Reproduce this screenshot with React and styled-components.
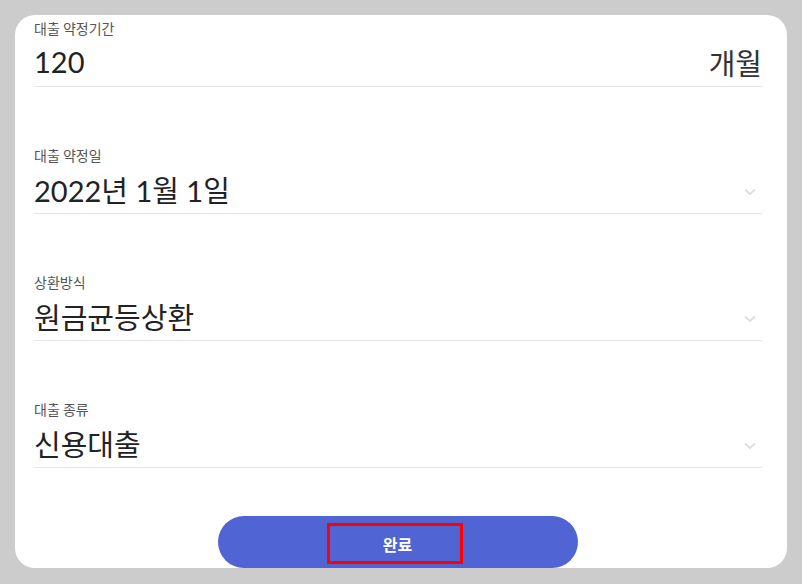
import React from 'react';
import styled, { createGlobalStyle } from 'styled-components';

const GlobalStyle = createGlobalStyle`
  html, body {
    margin: 0;
    padding: 0;
    background: #cccccc;
  }
  body {
    font-family: Lato, "Noto Sans CJK KR", sans-serif;
  }
`;

const Page = styled.div`
  width: 802px;
  height: 584px;
  padding: 15px 15px 16px 15px;
  box-sizing: border-box;
`;

const Card = styled.div`
  height: 553px;
  background: #ffffff;
  border-radius: 20px;
  overflow: hidden;
  padding: 4px 25px 0 19px;
  box-sizing: border-box;
  display: flex;
  flex-direction: column;
`;

const Field = styled.div`
  display: flex;
  flex-direction: column;
  border-bottom: 1px solid #e6e6e6;
  & + & {
    margin-top: 59px;
  }
`;

const Label = styled.div`
  font-family: "Noto Sans CJK KR", sans-serif;
  font-size: 14px;
  line-height: 18px;
  color: #555555;
`;

const ValueRow = styled.div`
  height: 49px;
  display: flex;
  align-items: center;
  justify-content: space-between;
`;

const Value = styled.div`
  font-family: Lato, "Noto Sans CJK KR", sans-serif;
  font-size: 29px;
  color: #222222;
`;

const Unit = styled(Value)`
  color: #333333;
`;

const Chevron = styled.svg`
  width: 12px;
  height: 8px;
  margin-right: 6px;
  margin-top: 6px;
`;

const Footer = styled.div`
  margin-top: 48px;
  display: flex;
  justify-content: center;
`;

const Button = styled.button`
  width: 360px;
  height: 52px;
  border: none;
  border-radius: 26px;
  background: #5064d4;
  display: flex;
  align-items: center;
  justify-content: center;
  padding: 0;
  cursor: pointer;
`;

const Focus = styled.span`
  width: 136px;
  height: 41px;
  box-sizing: border-box;
  border: 3px solid #ff0000;
  margin-top: 3px;
  margin-left: -6px;
  padding-left: 5px;
  display: flex;
  align-items: center;
  justify-content: center;
  font-family: "Noto Sans CJK KR", sans-serif;
  font-weight: 700;
  font-size: 16px;
  color: #ffffff;
`;

const Down = () => (
  <Chevron viewBox="0 0 12 8">
    <polyline points="1,1.5 6,6 11,1.5" fill="none" stroke="#dddddd" strokeWidth="1.8" />
  </Chevron>
);

const fields = [
  { label: '대출 약정기간', value: '120', unit: '개월' },
  { label: '대출 약정일', value: '2022년 1월 1일', select: true },
  { label: '상환방식', value: '원금균등상환', select: true },
  { label: '대출 종류', value: '신용대출', select: true },
];

const App = () => {
  return (
    <>
      <GlobalStyle />
      <Page>
        <Card>
          {fields.map((f) => (
            <Field key={f.label}>
              <Label>{f.label}</Label>
              <ValueRow>
                <Value>{f.value}</Value>
                {f.unit && <Unit>{f.unit}</Unit>}
                {f.select && <Down />}
              </ValueRow>
            </Field>
          ))}
          <Footer>
            <Button>
              <Focus>완료</Focus>
            </Button>
          </Footer>
        </Card>
      </Page>
    </>
  );
};

export default App;
